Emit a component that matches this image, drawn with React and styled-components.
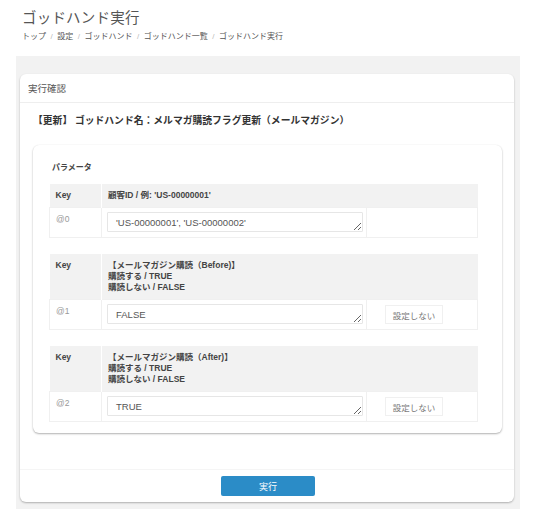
import React from "react";
import styled, { createGlobalStyle } from "styled-components";

const Global = createGlobalStyle`
  html, body { margin: 0; padding: 0; background: #fff; }
  body { font-family: "Liberation Sans", "Noto Sans CJK JP", sans-serif; color: #555; }
  * { box-sizing: border-box; }
`;

const PageHead = styled.header`
  padding: 7px 0 0 22px;
  height: 56px;
`;

const Title = styled.h1`
  margin: 0;
  font-size: 14.5px;
  font-weight: 400;
  line-height: 22px;
  color: #555;
  letter-spacing: 0.2px;
`;

const Crumbs = styled.nav`
  display: flex;
  gap: 4.5px;
  font-size: 8px;
  line-height: 12px;
  margin-top: 2px;
  color: #555;
`;

const Sep = styled.span`
  color: #bbb;
`;

const Panel = styled.main`
  margin: 0 16px;
  background: #f2f2f2;
  padding: 18px 6px 7px 4px;
`;

const Card = styled.section`
  background: #fff;
  border-radius: 6px;
  box-shadow: 0 1px 2px rgba(0, 0, 0, 0.28);
`;

const CardHeader = styled.div`
  height: 29px;
  padding-left: 8px;
  display: flex;
  align-items: center;
  font-size: 9.5px;
  color: #555;
  border-bottom: 1px solid #eee;
`;

const CardBody = styled.div`
  padding: 10px 12px 36px 13px;
`;

const Heading = styled.h2`
  margin: 0 0 16px;
  font-size: 9.8px;
  line-height: 16px;
  font-weight: 700;
  color: #333;
`;

const Inner = styled.div`
  border-radius: 6px;
  background: #fff;
  box-shadow: 0 1px 2px rgba(0, 0, 0, 0.3), 0 0 1px rgba(0, 0, 0, 0.08);
  padding: 17px 25px 11px 16px;
`;

const Label = styled.div`
  font-size: 8px;
  font-weight: 700;
  color: #444;
  line-height: 12px;
  padding-left: 3px;
  margin-bottom: 10px;
`;

const Table = styled.table`
  width: 428px;
  border-collapse: collapse;
  table-layout: fixed;
  & + & { margin-top: 16px; }
`;

const Th = styled.th`
  background: #f2f2f2;
  text-align: left;
  font-size: 8.5px;
  font-weight: 700;
  color: #444;
  line-height: 11px;
  padding: 6px 6px;
  vertical-align: top;
  border-left: 1px solid #fff;
  &:first-child { border-left: none; padding-left: 6px; }
`;

const Td = styled.td`
  border: 1px solid #f0f0f0;
  vertical-align: top;
  padding: ${(p) => p.$pad || "4px 4px 5px 5px"};
  font-size: 8.5px;
  color: #999;
  height: 30px;
`;

const Area = styled.textarea`
  display: block;
  width: 256px;
  height: 20px;
  border: 1px solid #e6e6e6;
  border-radius: 1px;
  padding: 4px 8px;
  font-family: "Liberation Sans", "Noto Sans CJK JP", sans-serif;
  font-size: 9.5px;
  line-height: 11px;
  color: #555;
  resize: vertical;
  outline: none;
  overflow: hidden;
`;

const SkipButton = styled.button`
  margin: 1px 0 0 18px;
  width: 58px;
  height: 19px;
  border: 1px solid #f0f0f0;
  background: #fff;
  font-family: "Noto Sans CJK JP", sans-serif;
  font-size: 8.5px;
  color: #777;
  padding: 0;
`;

const Footer = styled.div`
  border-top: 1px solid #f5f5f5;
  display: flex;
  justify-content: center;
  padding: 6px 0 6px;
`;

const Primary = styled.button`
  width: 94px;
  height: 20px;
  margin-left: 2px;
  border: none;
  border-radius: 2px;
  background: #2b8cc7;
  color: #fff;
  font-family: "Noto Sans CJK JP", sans-serif;
  font-size: 9px;
  padding: 0;
`;

const params = [
  {
    key: "@0",
    head: ["顧客ID / 例: 'US-00000001'"],
    value: "'US-00000001', 'US-00000002'",
    skip: false,
  },
  {
    key: "@1",
    head: ["【メールマガジン購読（Before)】", "購読する / TRUE", "購読しない / FALSE"],
    value: "FALSE",
    skip: true,
  },
  {
    key: "@2",
    head: ["【メールマガジン購読（After)】", "購読する / TRUE", "購読しない / FALSE"],
    value: "TRUE",
    skip: true,
  },
];

export default function App() {
  return (
    <>
      <Global />
      <PageHead>
        <Title>ゴッドハンド実行</Title>
        <Crumbs>
          <span>トップ</span><Sep>/</Sep>
          <span>設定</span><Sep>/</Sep>
          <span>ゴッドハンド</span><Sep>/</Sep>
          <span>ゴッドハンド一覧</span><Sep>/</Sep>
          <span>ゴッドハンド実行</span>
        </Crumbs>
      </PageHead>
      <Panel>
        <Card>
          <CardHeader>実行確認</CardHeader>
          <CardBody>
            <Heading>【更新】 ゴッドハンド名：メルマガ購読フラグ更新（メールマガジン）</Heading>
            <Inner>
              <Label>パラメータ</Label>
              {params.map((p) => (
                <Table key={p.key}>
                  <colgroup>
                    <col style={{ width: 52 }} />
                    <col style={{ width: 265 }} />
                    <col style={{ width: 111 }} />
                  </colgroup>
                  <thead>
                    <tr>
                      <Th>Key</Th>
                      <Th colSpan={2}>
                        {p.head.map((h, i) => (
                          <div key={i}>{h}</div>
                        ))}
                      </Th>
                    </tr>
                  </thead>
                  <tbody>
                    <tr>
                      <Td $pad="6px 6px">{p.key}</Td>
                      <Td>
                        <Area defaultValue={p.value} />
                      </Td>
                      <Td $pad="4px 0 0">{p.skip && <SkipButton>設定しない</SkipButton>}</Td>
                    </tr>
                  </tbody>
                </Table>
              ))}
            </Inner>
          </CardBody>
          <Footer>
            <Primary>実行</Primary>
          </Footer>
        </Card>
      </Panel>
    </>
  );
}
